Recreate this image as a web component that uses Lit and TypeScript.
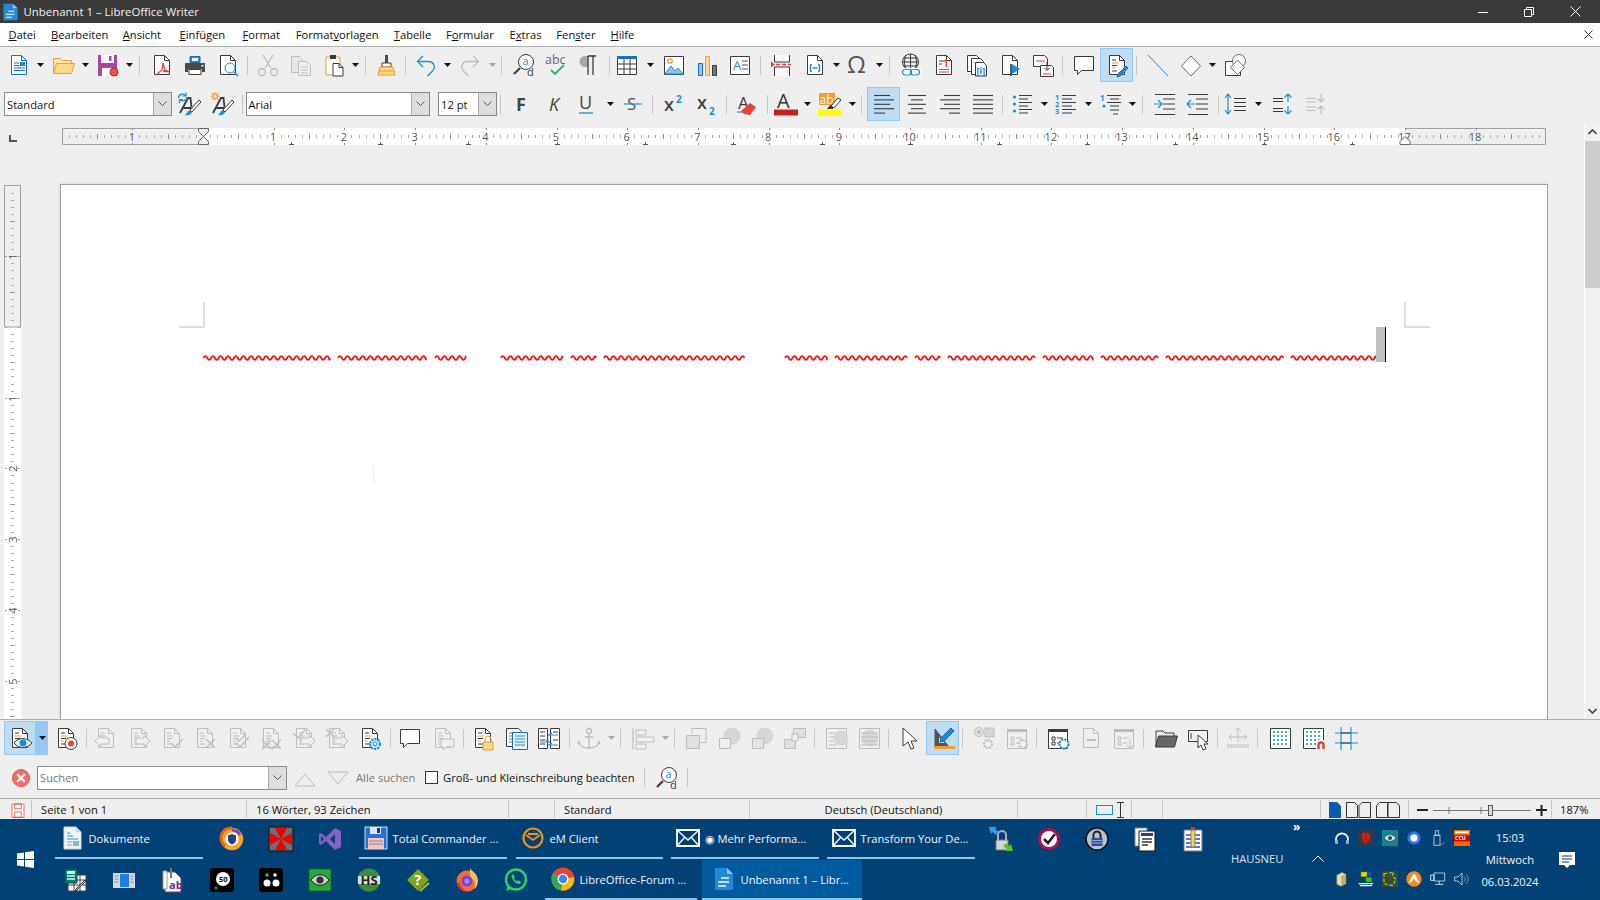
import { LitElement, html, css } from "lit";
import { customElement } from "lit/decorators.js";
import { unsafeSVG } from "lit/directives/unsafe-svg.js";

const D = "#3a3a3a", B = "#1e8bd2", O = "#f39a32", R = "#e8403a", G = "#bcbcbc", W = "#fff";
const P = (c: string, d: string, w = 1) => `<path d="${d}" fill="none" stroke="${c}" stroke-width="${w}"/>`;
const F = (c: string, d: string, s = "none") => `<path d="${d}" fill="${c}" stroke="${s}"/>`;
const T = (x: number, y: number, s: number, t: string, c: string, w = "400") => `<text x="${x}" y="${y}" font-size="${s}" fill="${c}" font-weight="${w}">${t}</text>`;
const doc = (c = D, f = W) => F(f, "M4.5 2.5h10l5 5v14h-15z", c) + P(c, "M14.5 2.5v5h5");
const tdoc = (c = D) => doc(c, c === D ? W : "#efefef") + P(c === D ? O : c, "M7 10h6M7 15h3") + P(c, "M7 7h4M7 12.5h5M7 18h5");
const bub = (c = D) => F(W, "M2.5 3.5h19v14h-12l-4 4v-4h-3z", c);
const book = (c: string) => tdoc(c);
const styleA = P(D, "M3 21L11 6h2.500l1 9M6.500 16h8", 1.8) + F(W, "M13 18L22 8l2 2-9 10z", D) + F(B, "M11 19c2-1 3.500 0 4 1.500-1 2-4 3.500-7 2.500 2-1 2-3 3-4z");

const I: Record<string, string> = {
  new: doc("#1a70c0") + P("#1a70c0", "M7 10h5M7 12.5h5M7 15h11M7 17.5h11") + F("#1e8bd2", "M13 9h5v4h-5z"),
  open: F("#fde6b0", "M2.5 20V5.5h7l2 2h9v3", O) + F("#fbd98c", "M2.5 20.5l3-10h18l-3 10z", O),
  save: F("#a548a5", "M2 2h19v21H2z") + F(W, "M5 2h13v8H5zM6 15h11v8H6z") + F("#a548a5", "M13 3h2.500v5H13z") + F("#f05050", "M14 19a4 4 0 1 0 8 0a4 4 0 1 0-8 0", "#a03030"),
  pdf: doc() + P("#e8403a", "M6 22l6-5 1-7 2 7 5 2-7-1", 1.3),
  print: F(B, "M7 3.5h10v6H7z", "#1673b5") + F(W, "M9 5h6v3H9z") + F("#4a4a4a", "M2 10h20v9h-3v-3H5v3H2z") + F(W, "M6 16.5h12v5H6z", D) + F(W, "M18.5 12h2v1.5h-2z"),
  preview: doc() + F("#fff", "M9 15a5 5 0 1 0 10 0a5 5 0 1 0-10 0", B) + P(B, "M18 19l4 4", 1.5),
  cut: P(G, "M7 2l8 13M17 2L9 15", 1.4) + `<circle cx="6" cy="19" r="3.5" fill="none" stroke="${G}" stroke-width="1.3"/><circle cx="18" cy="19" r="3.5" fill="none" stroke="${G}" stroke-width="1.3"/>`,
  copy: F("#e6e6e6", "M2.5 3.5h8l3 3v13h-11z", G) + F("#efefef", "M9.5 8.5h8l4 4v10h-12z", G) + P(G, "M12 14h7M12 17h7M12 20h7"),
  paste: F("#fff", "M4 4h14v18H4z", O) + F(D, "M8 2h6v4H8z") + F(W, "M11 10.5h6l4 4v8.5H11z", D) + P(D, "M17 10.5v4h4"),
  clone: F("#4a4a4a", "M11 2h3v8h-3z") + F(W, "M8 10h9v4H8z", D) + F("#fbd98c", "M6 14h13l2 8H4z", O) + P(O, "M4 18h16"),
  undo: P(B, "M3.5 8.5h11a5.5 5.5 0 0 1 4 9.5l-5 5", 1.3) + P(B, "M9 3L3.5 8.5 9 14", 1.3),
  redo: P(G, "M20.5 8.5h-11a5.5 5.5 0 0 0-4 9.5l5 5", 1.3) + P(G, "M15 3l5.5 5.5L15 14", 1.3),
  find: `<circle cx="14" cy="9" r="7.5" fill="#fff" stroke="${D}"/>` + P(D, "M8 15l-6 6", 2.2) + T(10.5, 12, 11, "a", B) + T(15, 23, 11, "d", D),
  spell: T(0, 11, 12.5, "abc", "#666") + P("#2bb673", "M6 17l4 4 9-9", 1.8),
  para: F("#a8a8a8", "M10 3H7a5 5 0 0 0 0 11h3z") + P(D, "M10 3v19M15 3v19M10 3h8", 1.3),
  table: F(W, "M2.5 3.5h19v18h-19z", D) + F("#1a70c0", "M2 3h20v3H2z") + P(D, "M2.5 11h19M2.5 16h19M9 6v15M15 6v15"),
  image: F(W, "M2.5 3.5h19v18h-19z", D) + F("#8fc6ee", "M3 21l6-8 4 5 3-3 5 6z", B) + `<circle cx="8" cy="8" r="2.2" fill="none" stroke="${O}" stroke-width="1.3"/>`,
  chart: F("#8fc6ee", "M3.5 10.5h4v12h-4z", "#1a70c0") + F("#fbd98c", "M10.5 3.5h4v19h-4z", O) + F("#777", "M17.5 12.5h4v10h-4z", D),
  textbox: F(W, "M2.5 3.5h19v18h-19z", D) + T(5, 17, 13, "A", B) + P("#555", "M14 8h6M14 12h6M14 16h6"),
  pagebreak: F("#f8f8f8", "M4.500 2v7h15V2", D) + F("#f8f8f8", "M4.500 23v-9h15v9", D) + P(R, "M6 11.5h15", 1.3).replace("<path", '<path stroke-dasharray="4 2"') + F(R, "M1 8.5l4 3-4 3z"),
  field: doc() + P(B, "M9 12H7.5v6H9M15 12h1.5v6H15M9.5 15h5", 1.4),
  omega: T(1, 20, 24, "Ω", "#555"),
  link: `<circle cx="11.5" cy="9" r="8" fill="none" stroke="${D}"/>` + P(D, "M3.5 9h16M4.5 5h14M4.5 13h14M11.5 1v16M7 2c-2 4-2 10 0 14M16 2c2 4 2 10 0 14") + F(W, "M3 15h19v8H3z") + `<rect x="3.5" y="16.5" width="9" height="5.5" rx="2.7" fill="none" stroke="${B}" stroke-width="1.2"/><rect x="11.5" y="16.5" width="9" height="5.5" rx="2.7" fill="none" stroke="${B}" stroke-width="1.2"/>`,
  footnote: doc() + T(11, 14, 10, "1", R, "700") + P(R, "M7 16.5h10M7 19h10") + P(D, "M7 8h5M7 11h3"),
  endnote: F(W, "M2.5 2.5h9l3 3v13h-12z", D) + F(W, "M6.5 5.5h9l3 3v13h-12z", D) + F("#f8f8f8", "M10.5 9.5h8l3 3v10.5h-11z", D) + T(11.5, 21, 9, "[i]", B, "700"),
  bookmark: doc() + F("#555", "M12 11h2v12h-2z") + F("#1e8bd2", "M14 11l8 5-8 5z"),
  crossref: F(W, "M2.5 2.5h11l3 3v8h-14z", D) + P(R, "M5 8h9") + F(W, "M9.5 12.5h11l2 2v9h-13z", D) + P(R, "M12 21h8") + P(D, "M16 9v8M13.5 15l2.5 2.5 2.5-2.5"),
  comment: bub(),
  track: tdoc() + F(B, "M13 21l-1 3 3-1 8-8-2-2z", "#176ca8"),
  line: P(B, "M2 2l20 21"),
  shape: F(W, "M12 3l9.5 10L12 23 2.5 13z", "#6a6a6a"),
  draw: F(W, "M2.5 8.5h15v14h-15z", D) + `<circle cx="16" cy="8" r="6.5" fill="#fff" stroke="#6a6a6a"/>` + F(W, "M14.5 7l7 7.5-7 7-7-7z", "#6a6a6a"),
  upd: styleA + P(B, "M1.500 6a4 4 0 0 1 7-2.500M9 .500v3.500H5.500M10 5a4 4 0 0 1-7 2.500M2.500 11V7.500H6", 1.2),
  nw: styleA + P(O, "M5 0v8.500M.5 4.300h9M1.800 1l6.500 6.500M8.300 1L1.800 7.500", 1.1) + `<circle cx="5" cy="4.300" r="2" fill="#efefef" stroke="${O}"/>`,
  clear: T(2, 17, 17, "A", D) + P(B, "M1 20h8", 1.2) + F(R, "M8 22l-3-3 9-8 6 4-6 8z"),
  al: al([16, 20, 16, 20, 11], "l"),
  ac: al([18, 12, 18, 12, 18], "c"),
  ar: al([16, 20, 16, 20, 11], "r"),
  aj: al([20, 20, 20, 20, 20], "l"),
  bul: `<circle cx="3.5" cy="5" r="1.6" fill="${B}"/><circle cx="3.5" cy="12" r="1.6" fill="${B}"/><circle cx="3.5" cy="19" r="1.6" fill="${B}"/>` + P(D, "M8 3.5h13M8 7h9M8 10.5h13M8 14h9M8 17.5h13M8 21h9"),
  num: T(0, 8, 7.5, "1", B, "700") + T(0, 15, 7.5, "2", B, "700") + T(0, 22, 7.5, "3", B, "700") + P(D, "M7 3.5h14M7 7h10M7 10.5h14M7 14h10M7 17.5h14M7 21h10"),
  out: T(1, 9, 8, "1", B, "700") + `<circle cx="5" cy="14" r="1.5" fill="${B}"/>` + P(D, "M8 3.5h14M11 7h9M8 10.5h14M11 14h9M11 18h9M14 22h5"),
  ind: P(D, "M2 2.5h20M10 7h12M10 12h12M10 17h12M2 22.5h20") + P(B, "M1 12h7M5 8l4 4-4 4", 1.2),
  ded: P(D, "M2 2.5h20M10 7h12M10 12h12M10 17h12M2 22.5h20") + P(B, "M9 12H2M5 8l-4 4 4 4", 1.2),
  lsp: P(B, "M4 3v19M1 6l3-4 3 4M1 18l3 4 3-4", 1.2) + P(D, "M10 6.5h12M10 10.5h12M10 14.5h12M10 18.5h12"),
  pinc: P(D, "M2 6.5h10M2 9.5h10M2 16.5h10M2 19.5h10", 1.2) + P(B, "M17 10V2M13.5 5.5L17 2l3.5 3.5M17 14v8M13.5 18.5L17 22l3.5-3.5", 1.2),
  pdec: P(G, "M2 6.5h10M2 10h10M2 15h10M2 18.5h10", 1.2) + P(G, "M17 2v8M13.5 6.5L17 10l3.5-3.5M17 22v-8M13.5 17.5L17 14l3.5 3.5", 1.2),
  eye: tdoc() + F("#dcecf8", "M6 17c4-6 13-6 18 0-5 6-14 6-18 0z", D) + `<circle cx="15" cy="17" r="3.4" fill="${B}"/>`,
  rec: tdoc() + `<circle cx="17" cy="17.5" r="6" fill="#fff" stroke="${D}"/><circle cx="17" cy="17.5" r="3" fill="${R}"/>`,
  gprev: book(G) + F("#efefef", "M1 15l6-6v3h8v6H7v3z", G),
  gnext: book(G) + F("#efefef", "M23 15l-6-6v3H9v6h8v3z", G),
  gacc: book(G) + P(G, "M11 17l4 4 8-8", 1.5),
  grej: book(G) + P(G, "M13 13l9 9M22 13l-9 9", 1.5),
  gacca: book(G) + P(G, "M10 17l4 4 9-10M10 12l3 3 7-7", 1.4),
  grejb: book(G) + P(G, "M3 14l9 9M12 14l-9 9M13 14l9 9M22 14l-9 9", 1.3),
  gac3: book(G) + P(G, "M1 7l5 5 7-8", 1.4) + F("#efefef", "M23 15l-6-6v3H9v6h8v3z", G),
  grj3: book(G) + P(G, "M1 3l8 8M9 3l-8 8", 1.4) + F("#efefef", "M23 15l-6-6v3H9v6h8v3z", G),
  gear: tdoc() + `<circle cx="17" cy="18" r="5" fill="#cde6f8" stroke="${B}" stroke-width="2" stroke-dasharray="2.2 1"/><circle cx="17" cy="18" r="2" fill="#fff" stroke="${B}"/>`,
  gcmt: book(G) + F("#efefef", "M10 13h13v8h-8l-3 3v-3h-2z", G),
  lockd: tdoc() + F("#fbd98c", "M12 16h10v8H12z", O) + P(O, "M14 16v-3a3 3 0 0 1 6 0v3"),
  listd: F(W, "M2.5 2.5h12l3 3v15h-15z", D) + P(B, "M5 7h9M5 10h9M5 13h9M5 16h9") + F("#e8f4fc", "M8.5 6.5h15v17h-15z", "#1a70c0") + P(B, "M11 10h10M11 13h10M11 16h10M11 19h10"),
  cmpd: F(W, "M1.5 2.5h9v20h-9zM13.5 2.5h9v20h-9z", D) + P(D, "M3 6h5M3 10h5M3 14h5M3 18h5M16 6h5M16 14h5") + P(B, "M21 9h-9l3-2M3 16h9l-3-2M21 19h-9l3-2", 1.1),
  anchor: `<circle cx="12" cy="5" r="2.5" fill="none" stroke="${G}" stroke-width="1.3"/>` + P(G, "M12 8v14M8 11h8M2 15c0 5 5 7 10 7s10-2 10-7M2 15l-1 3M22 15l1 3", 1.3),
  galign: P(G, "M2 2v22", 1.2) + F("#efefef", "M5 4h10v5H5zM5 11h18v5H5zM5 18h10v5H5z", G),
  gfwd: F("#e0e0e0", "M2.5 9.5h13v13h-13z", G) + P(G, "M8 8V2.5h14v14h-6"),
  gcirc: `<circle cx="15" cy="10" r="8.5" fill="#d6d6d6"/>` + F("#efefef", "M2.5 12.5h11v10h-11z", G),
  gcirc2: `<circle cx="15" cy="10" r="8.5" fill="#d6d6d6"/>` + F("#e4e4e4", "M2.5 12.5h11v10h-11z", G),
  gsplit: F("#e0e0e0", "M10.5 2.5h12v9h-12z", G) + F("#e0e0e0", "M1.5 13.5h11v9h-11z", G) + F("#efefef", "M9 8h6v7H9z", G),
  gwrap1: F("#efefef", "M2.5 2.5h20v20h-20z", G) + P(G, "M5 7h8M5 11h5M5 15h5M5 19h8") + `<circle cx="17" cy="12" r="7.5" fill="#d6d6d6"/>`,
  gwrap2: F("#efefef", "M2.5 2.5h20v20h-20z", G) + `<circle cx="13" cy="12" r="8.5" fill="#d6d6d6"/>` + P(G, "M4 7h17M4 11h17M4 15h17M4 19h17"),
  cursor: F(W, "M5 2l14 13h-6l3 7-3 1-3-7-5 4z", D),
  ruleb: F("#555", "M4 3v18h14z", "#555") + F("#bedcf3", "M8 11v6h6z") + F(O, "M3 20h21v3H3z") + F(B, "M10 12L20 2l3 3-10 10-4 1z", "#176ca8"),
  gopt: `<circle cx="7" cy="6" r="4.5" fill="#e4e4e4" stroke="${G}"/><circle cx="7" cy="6" r="2" fill="${G}"/>` + F("#d6d6d6", "M13 2h9v9h-9z", G) + `<circle cx="16" cy="18" r="4" fill="#efefef" stroke="${G}" stroke-width="2" stroke-dasharray="2 1"/>`,
  gform: F("#efefef", "M2.5 3.5h19v19h-19z", G) + F(G, "M2 3h20v3H2z") + P(G, "M6 11h3v3H6zM6 16h3v3H6zM11 12h6M11 17h4") + `<circle cx="18" cy="18" r="4" fill="#efefef" stroke="${G}" stroke-width="2" stroke-dasharray="2 1"/>`,
  formd: F(W, "M2.5 3.5h19v19h-19z", D) + F(D, "M2 3h20v3H2z") + P(D, "M6 11h3v3H6zM6 16h3v3H6zM11 12h6M11 17h4") + `<circle cx="18" cy="18" r="4.5" fill="#fff" stroke="${B}" stroke-width="2.2" stroke-dasharray="2 1"/>`,
  gfield: doc(G, "#efefef") + F(G, "M8 13h9v2H8z"),
  gform2: F("#efefef", "M2.5 3.5h19v19h-19z", G) + F(G, "M2 3h20v3H2z") + P(G, "M6 11h3v3H6zM6 16h3v3H6zM11 12h6M11 17h4M18 14v8M15 19l3 3 3-3"),
  folder: P(D, "M3 20V5h7l2 2h9v3") + F("#666", "M2.5 21l3-11h19l-3 11z", D),
  cursel: F("#efefef", "M2.5 4.5h19v11h-19z", D) + P(D, "M5 7v6") + F(W, "M12 9l10 9h-4l2 5-3 1-2-5-3 3z", D),
  gmove: P(G, "M12 2v14M9 5l3-3 3 3M3 11h18M6 8l-3 3 3 3M18 8l3 3-3 3") + F("#d6d6d6", "M1 18h22v4H1z"),
  grid: F(W, "M2.5 2.5h20v20h-20z", D) + dots(),
  snap: F(W, "M2.5 2.5h20v20h-20z", D) + dots() + F(W, "M15 14h10v10H15z") + P(R, "M17.5 23v-4a2.5 2.5 0 0 1 5 0v4", 2.5),
  cross: P(B, "M7 1v23M17 1v23M1 7h23M1 17h23", 1.1) + P(D, "M7 7h10M7 17h10", 1.1),
  cancel: `<circle cx="12" cy="12" r="11.500" fill="#f26d6d" stroke="#d44"/>` + P(W, "M7 7l10 10M17 7L7 17", 3),
  up: F("#efefef", "M2 20L12 8l10 12z", G),
  down: F("#efefef", "M2 6l10 12L22 6z", G),
  findb: `<circle cx="14" cy="9" r="7.5" fill="#fff" stroke="${D}"/>` + P(D, "M8 15l-6 6", 2.2) + T(10.5, 12, 11, "a", B) + T(15, 23, 11, "d", D),
  ssave: F(W, "M3 3h18v20H3z", "#e02d2d") + F("none", "M7 3h10v7H7zM7 15h10v8H7z", "#e02d2d"),
};
function al(w: number[], m: string) {
  return w.map((n, i) => {
    const y = 3.5 + i * 4.4; const x = m === "c" ? 12 - n / 2 : m === "r" ? 22 - n : 2;
    return P(D, `M${x} ${y}h${n}`, 1.1);
  }).join("");
}
function dots() {
  let s = ""; for (let y = 6; y < 22; y += 4) for (let x = 6; x < 22; x += 4) s += `<rect x="${x - 1}" y="${y - 1}" width="2" height="2" fill="#4aa5e0"/>`;
  return s;
}
I.F = T(6, 19, 18, "F", "#444", "700");
I.K = T(6, 19, 18, "K", "#444", "400").replace("<text", '<text font-style="italic"');
I.U = T(3, 17, 18, "U", "#444") + P(B, "M3 21h14", 1.3);
I.S = T(6, 18, 17, "S", "#555") + P(B, "M3 12h18", 1.2);
I.sup = T(2, 19, 18, "x", "#444", "600") + T(14, 11, 10, "2", B, "700");
I.sub = T(2, 17, 18, "x", "#444", "600") + T(14, 23, 10, "2", B, "700");
I.col = T(3, 16, 20, "A", "#333") + F("#c5211c", "M0 17.5h24v6H0z");
I.hi = F(O, "M1 1h16v12H1z") + T(1.5, 12, 12, "ab", W) + F("#fff", "M13 14l7-8 3 2-7 8z", D) + F(D, "M9 17l3-4 3 2v2z") + F("#ffff00", "M0 18h24v6H0z");

const C: Record<string, string> = {
  docs: F("#eef4fa", "M4 1h12l5 5v17H4z", "#c9d8e6") + F("#c0d6ec", "M16 1v5h5z") + P("#3b8ed6", "M7 7h3M7 10h6M7 13h11") + F("#89b4de", "M13 15h6v5h-6z") + P("#99a", "M7 16h5M7 19h5"),
  vpn: `<circle cx="12" cy="12" r="9" fill="#fff" stroke="#f6a623" stroke-width="4.5"/><path d="M5 19a10 10 0 0 1 7-18" fill="none" stroke="#e8601c" stroke-width="3"/><path d="M12 3a9 9 0 0 1 8 5" fill="none" stroke="#6b4bc8" stroke-width="3"/>` + F("#2b3a8c", "M12 7l4 1.5v4c0 3-2 4-4 5-2-1-4-2-4-5v-4z"),
  cross: F("#6e6e6e", "M0 0h24v24H0z", "#111") + F("#f00000", "M12 12L6 1h12zM12 12L23 6v12zM12 12L18 23H6zM12 12L1 18V6z"),
  vs: F("#8661c5", "M17 1l6 3v16l-6 3-9-9-5 4-2-1V7l2-1 5 4zM17 7l-5 5 5 5zM3 9v6l3-3z"),
  tc: F("#2a6fd6", "M1 1h22v22H1z", "#cde") + F("#dde7f5", "M6 1h11v7H6z") + F("#153a7a", "M13 2h3v5h-3z") + F("#f6c3c3", "M4 12h16v11H4z") + P("#888", "M5 15h14M5 18h14"),
  em: `<circle cx="12" cy="12" r="9.5" fill="none" stroke="#f29111" stroke-width="2.2"/>` + P("#f29111", "M5 9l7 5 7-5M7 8h10", 1.8),
  mail: `<path d="M1 4h22v16H1z" fill="none" stroke="#fff" stroke-width="1.8"/>` + P(W, "M1 4l11 10L23 4M1 20l8-9M23 20l-8-9", 1.3),
  secure: F("#cfd6dc", "M7 13h12v10H7z", "#777") + P("#aab", "M9 13V8a4 4 0 0 1 8 0v5", 2) + F("#2ea3ef", "M0 0h8L6 2l4 3-3 3-3-3-2 2z") + F("#54c322", "M24 24h-8l2-2-4-3 3-3 3 3 2-2z"),
  chk: `<circle cx="12" cy="12" r="11" fill="#a8104f"/><circle cx="12" cy="12" r="8" fill="#fff"/>` + P("#222", "M7 12l4 4 7-9", 2.6),
  kp: `<circle cx="12" cy="12" r="11" fill="#b9c3d6" stroke="#111" stroke-width="1.5"/>` + F("#2d4aa8", "M6.5 11h11v8h-11z") + P("#222", "M8.5 11V8a3.5 3.5 0 0 1 7 0v3", 2) + P("#9ab", "M7 13.5h10M7 16h10"),
  stack: F(W, "M2 1h12v18H2z", "#888") + F(W, "M6 4h16v20H6z", "#111") + F("#2233cc", "M8 6h12v3H8z") + P("#333", "M9 12h10M9 15h10M9 18h6", 1.6),
  note: F(W, "M3 3h18v21H3z", "#778") + P("#3344cc", "M5 8h14M5 12h14M5 16h14M5 20h14", 1.7) + F("#f6d83c", "M10 3h4v15l-2 3-2-3z", "#886") + F("#d33", "M10 0h4v3h-4z"),
  calc: F("#fff", "M5 7h18v16H5z", "#444") + P("#444", "M5 12h18M5 17h18M11 7v16M17 7v16") + F("#0d7c7c", "M2 1h12v14H2z", "#053") + F("#bff", "M4 3h8v3H4z") + P("#bff", "M4 8h8M4 11h8", 1.3) + F("#f0d040", "M14 22l-2 2 1-3 9-9 1 1z", "#333"),
  win: F("#d4dbe3", "M1 5h22v15H1z") + F("#1a7fe0", "M8 6h9v13H8z") + P("#889", "M2.5 8h4M2.5 11h4M2.5 14h4M18.5 8h3M18.5 11h3M18.5 14h3"),
  att: F(W, "M4 4h10l6 6v14H4z", "#555") + F(W, "M2 3h4v18H2z", "#999") + P("#777", "M10 0v10", 2) + T(8, 21, 11, "ab", "#7d1f9e", "700"),
  blackb: F("#000", "M3 0h18a3 3 0 0 1 3 3v18a3 3 0 0 1-3 3H3a3 3 0 0 1-3-3V3a3 3 0 0 1 3-3z") + `<circle cx="13" cy="11" r="7" fill="#fff"/>` + T(9, 14, 7.5, "50", "#000", "700") + `<circle cx="6" cy="20" r="1.5" fill="#1c9c3c"/>`,
  dots: F("#000", "M3 0h18a3 3 0 0 1 3 3v18a3 3 0 0 1-3 3H3a3 3 0 0 1-3-3V3a3 3 0 0 1 3-3z") + `<circle cx="8" cy="15" r="3.5" fill="#fff"/><circle cx="17" cy="15" r="3.5" fill="#fff"/><circle cx="8" cy="7" r="1.8" fill="#1dbf49"/><circle cx="16" cy="7" r="1.8" fill="#fff"/>`,
  geye: F("#2aa63a", "M1 1h22v22H1z", "#0e6a1e") + F("#ccc", "M3 12c5-7 13-7 18 0-5 7-13 7-18 0z", "#222") + `<circle cx="12" cy="12" r="3.5" fill="#333"/>`,
  hs: `<circle cx="12" cy="12" r="11.5" fill="#3d8c40"/>` + F("#ddd", "M1 8h22v8H1z") + T(3.5, 17, 13, "HS", "#222", "700"),
  qd: F("#7fa31a", "M12 1l11 11-11 11L1 12z") + T(8.5, 17, 14, "?", W, "700") + P("#9fc53a", "M14 23l9-8", 2),
  ff: `<circle cx="12" cy="13" r="10.5" fill="#ff6a2b"/>` + F("#ffbd4f", "M15 0c1 3 8 5 8 13 0 4-2 7-4 8 2-4 1-9-4-12z") + F("#e22850", "M2 15c1 5 5 8 10 8-5-2-7-5-7-8z") + `<circle cx="12" cy="13" r="5.5" fill="#7542e5"/><circle cx="12" cy="13" r="2.500" fill="#b08cf0"/>`,
  wa: `<circle cx="12" cy="11.5" r="10" fill="none" stroke="#25d366" stroke-width="2.4"/>` + F("#25d366", "M2 23l2-6 4 4z") + F("#25d366", "M8 7c-2 3 4 10 8 9l1-2-3-2-1 1c-1 0-3-2-3-3l1-1-2-3z"),
  chrome: `<circle cx="12" cy="12" r="11.5" fill="#ea4335"/>` + F("#34a853", "M12 12L2 6A11.5 11.5 0 0 0 10 23.4z") + F("#fbbc05", "M12 12l11-2A11.5 11.5 0 0 1 10 23.4z") + `<circle cx="12" cy="12" r="5.5" fill="#fff"/><circle cx="12" cy="12" r="4.2" fill="#4285f4"/>`,
  writer: F("#2289d6", "M3 1h12l6 6v16H3z") + F("#8ec6ef", "M15 1l6 6h-6z") + P(W, "M9 11h8M6 15h11M6 19h8", 1.5),
  head: P(W, "M3 19v-5a9 9 0 0 1 18 0v5", 2.5) + F("#7fb2d8", "M2 15h4v6H2zM18 15h4v6h-4z"),
  pep: F("#333845", "M0 0h24v24H0z") + F("#d61a1a", "M12 5c4-3 8 2 6 7-1 5-4 9-6 9s-5-4-6-9c-2-5 2-10 6-7z") + P("#333", "M12 6v14"),
  teal: F("#12868c", "M0 0h24v24H0z") + F("#cde", "M3 12c5-7 13-7 18 0-5 7-13 7-18 0z", "#234") + `<circle cx="12" cy="12" r="3" fill="#345"/>`,
  ring: `<circle cx="12" cy="12" r="10" fill="#2a71f0"/><circle cx="12" cy="12" r="5.5" fill="#fff"/>`,
  usb: F("none", "M6 8h9v15H6z", W) + F("none", "M8 1h5v7H8z", W) + P("#bcd", "M15 21l2 2 5-5"),
  ccu: F("#f06a00", "M0 0h24v24H0z") + F("#fff", "M2 2h20v3H2z") + F("#d40000", "M0 8h24v9H0z") + T(1.5, 15.5, 8, "CCU", W, "700"),
  cube: F("#e8dda0", "M4 6l8-4 6 3v14l-8 4-6-3z", "#666") + F("#b9ad70", "M11 7l7-2v14l-7 4z"),
  net: F("#dddd00", "M4 1h10v8H4z", "#222") + F("#1ad41a", "M11 9h10v8H11z", "#222") + P(W, "M1 19h22M3 22h18", 2) + F("#2244dd", "M14 2h6v5h-6z"),
  dkg: F("#3a4a3a", "M0 0h24v24H0z") + P("#9edb1e", "M3 4l15-2-3 6 6 4-5 10-13-3z", 1.8).replace("<path", '<path stroke-dasharray="5 3"'),
  orng: `<circle cx="12" cy="12" r="11.5" fill="#f28a24"/>` + F("#fff", "M11 5l3 0 6 13-5-2-3-5-3 5-5 2z"),
  lan: F("none", "M6 3h16v12H6z", W) + P(W, "M1 6h5v8H1zM14 15v4M8 20h12", 1.2),
  vol: F("none", "M1 9h5l6-6v18l-6-6H1z", W) + P("#abc", "M15 8a5 5 0 0 1 0 8M18 5a9 9 0 0 1 0 14"),
};

const ic = (n: string, s = 24) => html`<svg class="ic" width=${s} height=${s} viewBox="0 0 24 24" overflow="visible">${unsafeSVG(I[n] ?? "")}</svg>`;
const tic = (n: string, s = 24) => html`<svg class="ic" width=${s} height=${s} viewBox="0 0 24 24" overflow="visible">${unsafeSVG(C[n] ?? "")}</svg>`;
const caret = (off = false) => html`<svg width="7" height="4" viewBox="0 0 9 5" preserveAspectRatio="none"><path d="M0 0h9L4.5 5z" fill=${off ? "#a8a8a8" : "#111"}/></svg>`;

function bar(spec: string) {
  return spec.split(" ").map((t) => {
    if (t[0] === "|") return html`<span class="sep" style="width:${t.slice(1)}px"><i></i></span>`;
    if (t === "V") return html`<span class="dd on">${caret()}</span>`;
    if (t[0] === "v") { const w = t.slice(1) || "11.5"; return html`<span class="dd" style="width:${w}px">${caret()}</span>`; }
    if (t[0] === "w") { const w = t.slice(1) || "11.5"; return html`<span class="dd" style="width:${w}px">${caret(true)}</span>`; }
    if (t[0] === "_") return html`<span style="width:${t.slice(1)}px;flex:none"></span>`;
    if (t[0] === "*") return html`<span class="btn on">${ic(t.slice(1))}</span>`;
    return html`<span class="btn">${ic(t)}</span>`;
  });
}
const combo = (t: string, w: number, ph = false) => html`<span class="combo" style="width:${w}px"><span class="cv ${ph ? "ph" : ""}">${t}</span><span class="cb"><svg width="9" height="6" viewBox="0 0 9 6"><path d="M.5 .5l4 4 4-4" fill="none" stroke="#555"/></svg></span></span>`;

function hruler() {
  const U = 70.7, z = 141; let s = "";
  s += `<rect x="0" y="0" width="1484" height="17" fill="#fff"/>`;
  s += `<path d="M141 .5H.5v16H141M1343 .5H1483.5v16H1343" fill="#efefef" stroke="#a0a0a0"/>`;
  for (let i = -20; i <= 190; i++) {
    const x = z + i * U / 10; if (x < 4 || x > 1480) continue;
    if (i % 10 === 0) {
      if (i !== 0) s += `<text x="${x - .5}" y="12.5" font-size="11" fill="#555" text-anchor="middle">${Math.abs(i / 10)}</text>`;
      s += `<path d="M${Math.round(x) + .5} 0v2M${Math.round(x) + .5} 15v2" stroke="#888"/>`;
    } else if (i % 5 === 0) s += `<path d="M${Math.round(x) + .5} 6v5" stroke="#888"/>`;
    else s += `<path d="M${Math.round(x) + .5} 7v3" stroke="#aaa"/>`;
  }
  for (let n = 1; n <= 13; n++) { const x = Math.round(z + n * 88.4) + .5; s += `<path d="M${x} 14v3M${x - 2.5} 16.5h5" stroke="#555"/>`; }
  s += `<path d="M136.5 .5h10v3l-5 5 5 5v3h-10v-3l5-5-5-5z" fill="#efefef" stroke="#666"/>`;
  s += `<path d="M1343 8.5l5 5v3h-10v-3z" fill="#fff" stroke="#666"/>`;
  return html`<svg class="hr" width="1484" height="17" viewBox="0 0 1484 17">${unsafeSVG(s)}</svg>`;
}
function vruler() {
  const U = 70.7, z = 142; let s = `<rect x="0" y="142" width="17" height="400" fill="#fff"/><path d="M17 142H.5V.5h16V142" fill="#efefef" stroke="#a0a0a0"/>`;
  for (let i = -19; i <= 55; i++) {
    const y = Math.round(z + i * U / 10) + .5;
    if (i % 10 === 0) {
      if (i !== 0) s += `<text transform="translate(12.5 ${y}) rotate(-90)" font-size="11" fill="#555" text-anchor="middle">${Math.abs(i / 10)}</text>`;
      s += `<path d="M1 ${y}h2M14 ${y}h2" stroke="#999"/>`;
    } else if (i % 5 === 0) s += `<path d="M6 ${y}h5" stroke="#999"/>`;
    else s += `<path d="M7 ${y}h3" stroke="#aaa"/>`;
  }
  return html`<svg class="vr" width="17" height="534" viewBox="0 0 17 534">${unsafeSVG(s)}</svg>`;
}
const SQ = [[203.5, 330], [338, 426], [435, 465.6], [501, 562.5], [571, 596], [604, 744.4], [785, 827], [835, 907], [915, 940], [948, 1035], [1043, 1093], [1101, 1158], [1166, 1283.4], [1291, 1376]];
function pageArt() {
  const ox = 61, oy = 185; let d = "";
  for (const [a, b] of SQ) {
    let x = a - ox; const e = b - ox; d += `M${x} ${358 - oy}`; let up = true;
    while (x < e - .1) { const n = Math.min(x + 3.8, e); d += `Q${(x + n) / 2} ${(up ? 354.2 : 361.8) - oy} ${n} ${358 - oy}`; x = n; up = !up; }
  }
  const s = `<path d="${d}" fill="none" stroke="#f01414" stroke-width="1.8"/>
  <path d="M${179 - ox} ${327 - oy}h25M${204 - ox} ${302 - oy}v25M${1405 - ox} ${302 - oy}v25h25" fill="none" stroke="#d2d2d2" stroke-width="1.4"/>
  <rect x="${1376 - ox}" y="${327 - oy}" width="9" height="35" fill="#c0c0c0"/><rect x="${1385 - ox}" y="${327 - oy}" width="1" height="35" fill="#000"/>
  <path d="M${371 - ox} ${466 - oy}h5M${371 - ox} ${480 - oy}h5M${373.5 - ox} ${466 - oy}v14" stroke="#eee" fill="none"/>`;
  return html`<svg class="art" width="1486" height="534" viewBox="0 0 1486 534">${unsafeSVG(s)}</svg>`;
}

const MENU: [string, string, string, number][] = [
  ["", "D", "atei", 42.5], ["", "B", "earbeiten", 71.7], ["", "A", "nsicht", 56.8], ["", "E", "infügen", 62.9], ["", "F", "ormat", 53.4], ["Format", "v", "orlagen", 98], ["", "T", "abelle", 52.2], ["F", "o", "rmular", 63.5], ["E", "x", "tras", 46.9], ["Fen", "s", "ter", 54.1], ["", "H", "ilfe", 40],
];

@customElement("app-root")
export class AppRoot extends LitElement {
  static styles = css`
    :host { display: flex; flex-direction: column; width: 1600px; height: 900px; overflow: hidden; background: #efefef; font: 11.2px/1 "Open Sans", "Noto Sans", sans-serif; color: #111; }
    svg text { font-family: "Open Sans", "Liberation Sans", sans-serif; }
    .title { flex: none; height: 23px; background: #3a3a3a; color: #f2f2f2; display: flex; align-items: center; padding-left: 1px; }
    .title .tt { margin-left: 3.5px; font-size: 11.4px; flex: 1; }
    .winb { display: flex; align-items: center; margin-right: 2px; }
    .winb span { display: flex; justify-content: center; width: 46px; }
    .menu { flex: none; height: 23px; background: #fff; border-bottom: 1px solid #aeaeae; display: flex; align-items: center; padding-left: 8.5px; }
    .menu span { flex: none; }
    .menu .x { margin-left: auto; margin-right: 7px; display: flex; }
    .tb { flex: none; display: flex; align-items: center; white-space: nowrap; }
    .tb1 { height: 36px; padding-left: 2px; }
    .tb2 { height: 42px; padding-left: 4px; }
    .tb3 { height: 37px; padding-left: 4px; border-top: 1px solid #aeaeae; }
    .tb3 > span { margin-top: -1px; }
    .btn { flex: none; width: 33px; height: 34px; display: flex; align-items: center; justify-content: center; box-sizing: border-box; }
    .btn.on { background: #bedcf3; border: 1px solid #93c9f3; }
    .tb3 .btn.on:first-child { width: 32px; }
    .dd { flex: none; width: 11.5px; height: 34px; display: flex; align-items: center; justify-content: center; box-sizing: border-box; }
    .dd.on { width: 12px; background: #93c9f3; border: 1px solid #93c9f3; margin-right: 1.5px; }
    .sep { flex: none; display: flex; align-items: center; height: 20px; }
    .sep i { display: block; margin-left: 3px; width: 1px; height: 19px; background: #c6c6c6; }
    .ic { display: block; }
    .combo { flex: none; box-sizing: border-box; height: 24px; display: flex; background: #fff; border: 1px solid #8a8a8a; }
    .cv { flex: 1; padding: 1px 0 0 2px; display: flex; align-items: center; color: #111; }
    .cv.ph { color: #777; }
    .cb { width: 17px; background: #dedede; border-left: 1px solid #a8a8a8; display: flex; align-items: center; justify-content: center; }
    .gap8 { flex: none; width: 8.5px; }
    .main { flex: none; height: 594px; display: flex; }
    .content { flex: 1; min-width: 0; padding-top: 3px; display: flex; flex-direction: column; }
    .hrow { flex: none; height: 17px; display: flex; align-items: center; }
    .corner { flex: none; width: 62px; display: flex; padding: 3px 0 0 9px; box-sizing: border-box; }
    .hr, .vr, .art { display: block; }
    .work { flex: 1; display: flex; margin-top: 39px; min-height: 0; }
    .vcol { flex: none; width: 60px; padding: 1px 0 0 4px; box-sizing: border-box; overflow: hidden; }
    .page { flex: none; width: 1488px; box-sizing: border-box; background: #fff; border: 1px solid #a0a0a0; border-bottom: none; box-shadow: -1px -1px 2px #ddd; overflow: hidden; }
    .sb { flex: none; width: 16px; margin-top: -1px; background: #f0f0f0; border-left: 1px solid #fff; box-sizing: border-box; display: flex; flex-direction: column; }
    .sb .a { flex: none; height: 16px; display: flex; align-items: center; justify-content: center; }
    .sb .th { flex: none; margin-top: 1px; height: 147px; background: #cdcdcd; }
    .sb .sp { flex: 1; }
    .find { flex: none; height: 41px; display: flex; align-items: center; white-space: nowrap; }
    .find .cl { flex: none; width: 37px; display: flex; justify-content: center; padding-left: 5px; box-sizing: border-box; }
    .find .mut { color: #777; flex: none; width: 69px; }
    .chk { flex: none; width: 13px; height: 13px; background: #fff; border: 1px solid #333; box-sizing: border-box; margin-right: 5px; }
    .lab { flex: none; width: 197.5px; }
    .status { flex: none; height: 20px; border-top: 1px solid #aeaeae; display: flex; align-items: center; }
    .cell { flex: none; box-sizing: border-box; height: 18px; display: flex; align-items: center; border-left: 1px solid #c6c6c6; padding: 1px 0 0 9px; }
    .cell.c { justify-content: center; padding-left: 0; }
    .cell.n { border-left: none; padding-left: 0; }
    .task { flex: none; height: 81px; background: #014175; display: flex; color: #f4f4f4; }
    .start { flex: none; width: 50px; display: flex; align-items: center; justify-content: center; }
    .rows { flex: none; width: 1175px; display: flex; flex-direction: column; }
    .r1 { flex: none; height: 41px; display: flex; padding-left: 5px; }
    .r2 { flex: none; height: 40px; display: flex; }
    .tk { flex: none; width: 148px; height: 40px; box-sizing: border-box; border-bottom: 2px solid #8ec5ee; display: flex; align-items: center; padding-left: 5px; gap: 4.5px; }
    .tk.em { width: 146.5px; }
    .tk.r { width: 152px; height: 40px; padding-left: 6px; }
    .tk.act { background: #005a9e; width: 160px; padding-left: 10px; }
    .cellic { flex: none; width: 49px; height: 39px; display: flex; align-items: center; justify-content: center; }
    .cellic.n { width: 48px; }
    .ck { white-space: nowrap; margin-top: 2px; }
    .host { flex: none; width: 83.5px; display: flex; flex-direction: column; align-items: flex-start; padding-left: 6px; box-sizing: border-box; color: #d6e3ee; }
    .host .more { align-self: flex-end; margin: 2px 8px 20px 0; font-size: 12px; line-height: 12px; color: #fff; font-weight: 700; }
    .chev { flex: none; width: 19px; display: flex; align-items: center; justify-content: center; padding-bottom: 3px; box-sizing: border-box; }
    .tray { flex: none; width: 144px; display: grid; grid-template-columns: repeat(6, 24px); grid-auto-rows: 41px; align-items: center; justify-items: center; margin: -1.5px 0 0 2.5px; box-sizing: border-box; }
    .clock { flex: none; width: 72px; display: flex; flex-direction: column; align-items: center; justify-content: space-around; padding: 8px 0 7px; box-sizing: border-box; text-align: center; }
    .notif { flex: none; width: 41px; display: flex; align-items: center; justify-content: center; }
  `;

  render() {
    const tray = ["head", "pep", "teal", "ring", "usb", "ccu", "cube", "net", "dkg", "orng", "lan", "vol"];
    return html`
      <div class="title">
        <svg width="19" height="18" viewBox="0 0 24 24" preserveAspectRatio="none">${unsafeSVG(C.writer)}</svg>
        <span class="tt">Unbenannt 1 – LibreOffice Writer</span>
        <span class="winb">
          <span><svg width="10" height="10"><path d="M0 5.5h10" stroke="#fff"/></svg></span>
          <span><svg width="10" height="10"><path d="M.5 2.5h7v7h-7zM2.5 2V.5h7v7H8" fill="none" stroke="#fff"/></svg></span>
          <span><svg width="11" height="11"><path d="M.5 .5l10 10M10.5 .5l-10 10" stroke="#fff"/></svg></span>
        </span>
      </div>
      <div class="menu">
        ${MENU.map(([a, u, b, w]) => html`<span style="width:${w}px">${a}<u>${u}</u>${b}</span>`)}
        <span class="x"><svg width="9" height="9"><path d="M.5 .5l8 8M8.5 .5l-8 8" stroke="#333"/></svg></span>
      </div>
      <div class="tb tb1">${bar("new v open v save v |9.5 pdf print preview |7 cut copy paste v |7.5 clone |7 undo v redo w |9 find spell para |4 table v14.5 image chart textbox |9 pagebreak field v9.5 omega v |8.5 link footnote endnote bookmark crossref |8 comment *track |8 line shape v draw")}</div>
      <div class="tb tb2">
        ${combo("Standard", 168)}${bar("_0.5 upd nw |7")}${combo("Arial", 184)}<span class="gap8"></span>${combo("12 pt", 58.5)}
        ${bar("|9 F K U v S |8 sup sub |8 clear |5 col v hi v |9 *al ac ar aj |7 bul v num v10.5 out v |10 ind ded |5 lsp v |2 pinc pdec")}
      </div>
      <div class="main">
        <div class="content">
          <div class="hrow"><span class="corner"><svg width="8" height="7"><path d="M0 0h2v5h6v2H0z" fill="#555"/></svg></span>${hruler()}</div>
          <div class="work">
            <div class="vcol">${vruler()}</div>
            <div class="page">${pageArt()}</div>
          </div>
        </div>
        <div class="sb">
          <span class="a"><svg width="9" height="6"><path d="M.5 5l4-4 4 4" fill="none" stroke="#444" stroke-width="1.6"/></svg></span>
          <span class="th"></span><span class="sp"></span>
          <span class="a"><svg width="9" height="6"><path d="M.5 1l4 4 4-4" fill="none" stroke="#444" stroke-width="1.6"/></svg></span>
        </div>
      </div>
      <div class="tb tb3">${bar("*eye V rec |7 gprev gnext gacc grej gacca grejb gac3 grj3 gear |7 comment gcmt |7 lockd listd cmpd |7 anchor w |9.5 galign w |8 gfwd gcirc gcirc2 gsplit |8 gwrap1 gwrap2 |8 cursor *ruleb |8 gopt gform |8 formd gfield gform2 |8 folder cursel |7 gmove |9 grid snap cross")}</div>
      <div class="find">
        <span class="cl">${ic("cancel", 18)}</span>
        ${combo("Suchen", 250, true)}
        ${bar("_1 up down _2")}
        <span class="mut">Alle suchen</span>
        <span class="chk"></span><span class="lab">Groß- und Kleinschreibung beachten</span>
        ${bar("|7 _3 findb |6")}
      </div>
      <div class="status">
        <span class="cell n" style="width:31px;padding-left:10px">${ic("ssave", 16)}</span>
        <span class="cell" style="width:215px">Seite 1 von 1</span>
        <span class="cell" style="width:262px">16 Wörter, 93 Zeichen</span>
        <span class="cell" style="width:46px"></span>
        <span class="cell" style="width:195px">Standard</span>
        <span class="cell c" style="width:268px">Deutsch (Deutschland)</span>
        <span class="cell" style="width:69px"></span>
        <span class="cell" style="width:45px;gap:4px"><svg width="17" height="10"><rect x=".5" y=".5" width="16" height="9" fill="none" stroke="#1e8bd2"/></svg><svg width="7" height="16"><path d="M0 .5h7M0 15.5h7M3.5 .5v15" stroke="#333" fill="none"/></svg></span>
        <span class="cell" style="width:31px"></span>
        <span class="cell" style="width:158px"></span>
        <span class="cell" style="width:88px;gap:5px;padding-left:8px">
          <svg width="12" height="16"><path d="M0 0h8l4 4v12H0z" fill="#0a5cad"/></svg>
          <svg width="25" height="16"><path d="M.5 .5h8l3 3v12h-11zM13 3.500l3-3h8.500v15H13z" fill="none" stroke="#333"/></svg>
          <svg width="24" height="16"><path d="M.5 3.500l3-3h8v15h-11zM12 .5h8l3.500 3v12H12z" fill="none" stroke="#333"/></svg>
        </span>
        <span class="cell" style="width:143px;padding-left:8px">
          <svg width="131" height="14" viewBox="0 0 131 14"><path d="M0 7h11" stroke="#222" stroke-width="2"/><path d="M16 7.500h98M32 4v7M64 4v7" stroke="#777"/><rect x="71.500" y="2.500" width="4" height="10" fill="#ddd" stroke="#555"/><path d="M119 7h11M124.500 2v11" stroke="#222" stroke-width="2"/></svg>
        </span>
        <span class="cell" style="width:49px;padding-left:8px">187%</span>
      </div>
      <div class="task">
        <span class="start"><svg width="17" height="17" viewBox="0 0 17 17"><path d="M0 2.500l7-1v6.500H0zM8 1.300L17 0v8H8zM0 9h7v6.500l-7-1zM8 9h9v8l-9-1.300z" fill="#fff"/></svg></span>
        <div class="rows">
          <div class="r1">
            <span class="tk">${tic("docs")}<span class="ck">Dokumente</span></span>
            <span style="width:4.500px"></span>
            <span class="cellic">${tic("vpn")}</span><span class="cellic">${tic("cross")}</span><span class="cellic">${tic("vs")}</span>
            <span style="width:4.500px"></span>
            <span class="tk">${tic("tc")}<span class="ck">Total Commander ...</span></span>
            <span style="width:9px"></span>
            <span class="tk em">${tic("em")}<span class="ck">eM Client</span></span>
            <span style="width:8.500px"></span>
            <span class="tk">${tic("mail")}<span class="ck">◉ Mehr Performa...</span></span>
            <span style="width:8px"></span>
            <span class="tk">${tic("mail")}<span class="ck">Transform Your De...</span></span>
            <span style="width:2px"></span>
            ${["secure", "chk", "kp", "stack", "note"].map((n) => html`<span class="cellic n">${tic(n)}</span>`)}
          </div>
          <div class="r2">
            ${["calc", "win", "att", "blackb", "dots", "geye", "hs", "qd", "ff", "wa"].map((n) => html`<span class="cellic">${tic(n)}</span>`)}
            <span style="width:5px"></span>
            <span class="tk r">${tic("chrome")}<span class="ck">LibreOffice-Forum ...</span></span>
            <span style="width:5px"></span>
            <span class="tk r act">${tic("writer")}<span class="ck">Unbenannt 1 – Libr...</span></span>
          </div>
        </div>
        <div class="host"><span class="more">»</span><span>HAUSNEU</span></div>
        <span class="chev"><svg width="12" height="7"><path d="M.5 6.500l5.500-5.500 5.500 5.500" fill="none" stroke="#fff"/></svg></span>
        <div class="tray">${tray.map((n) => tic(n, 16))}</div>
        <div class="clock"><span>15:03</span><span>Mittwoch</span><span>06.03.2024</span></div>
        <span class="notif"><svg width="16" height="16"><path d="M0 0h16v13h-5l-3 3-3-3H0z" fill="#fff"/><path d="M3 4h10M3 7h10M3 10h7" stroke="#014175"/></svg></span>
      </div>
    `;
  }
}
